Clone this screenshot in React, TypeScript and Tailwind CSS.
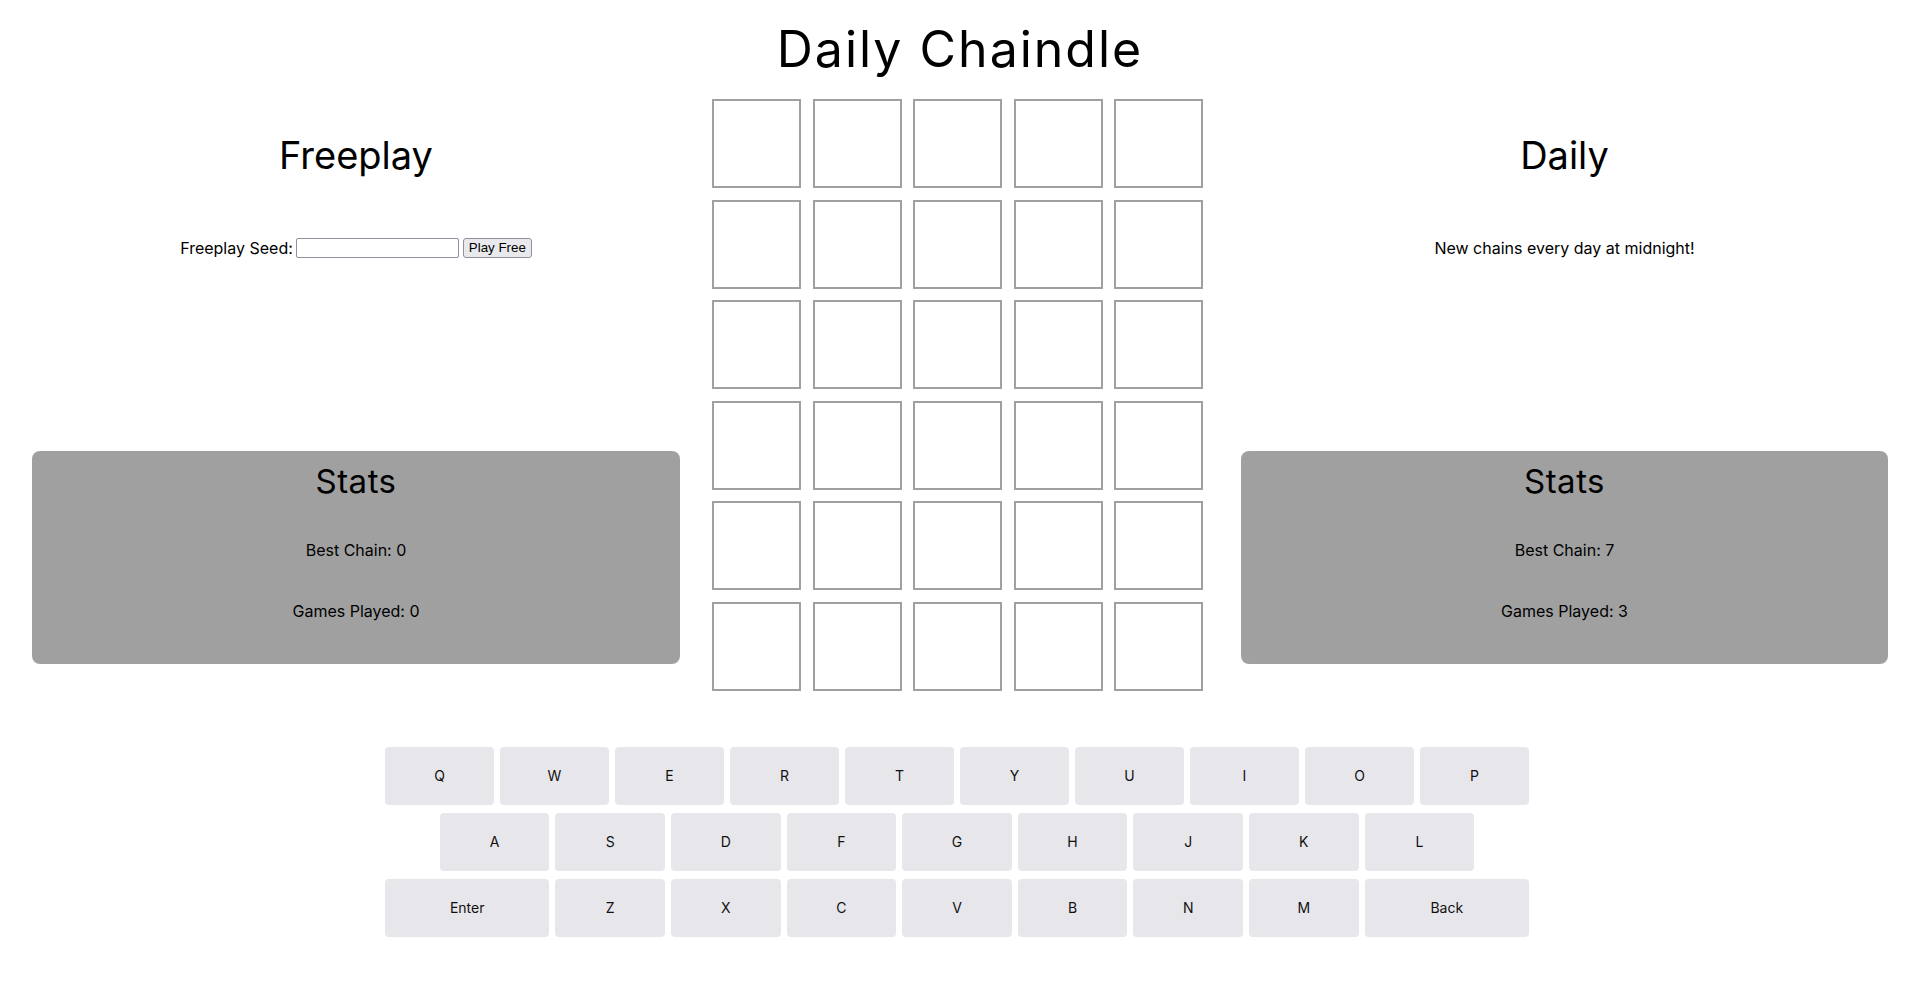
import React from "react";

const font = { fontFamily: "Inter, 'Noto Sans', sans-serif" };

function Tile() {
  return <div className="w-[89px] h-[89px] border-2 border-[#a0a0a0] bg-white" />;
}

function Key({ label, wide }: { label: string; wide?: boolean }) {
  return (
    <button
      className={`${wide ? "flex-[1.5]" : "flex-1"} mr-[6px] h-[58px] rounded-[4px] bg-[#e7e6eb] text-[14px] text-[#111] flex items-center justify-center`}
      style={font}
    >
      {label}
    </button>
  );
}

function Stats({ best, played }: { best: number; played: number }) {
  return (
    <div className="mt-[193px] h-[213px] rounded-[8px] bg-[#a0a0a0] pt-[10px] flex flex-col items-center text-black">
      <div className="text-[33px] leading-[40px] tracking-[0.5px]">Stats</div>
      <div className="mt-[37px] text-[16px] leading-[24px]">Best Chain: {best}</div>
      <div className="mt-[37px] text-[16px] leading-[24px]">Games Played: {played}</div>
    </div>
  );
}

export default function App() {
  const rows1 = ["Q", "W", "E", "R", "T", "Y", "U", "I", "O", "P"];
  const rows2 = ["A", "S", "D", "F", "G", "H", "J", "K", "L"];
  const rows3 = ["Z", "X", "C", "V", "B", "N", "M"];
  return (
    <div className="w-[1920px] h-[994px] bg-white text-black overflow-hidden" style={font}>
      <div className="pt-[19px] text-center text-[50px] leading-[60px] tracking-[2px]">Daily Chaindle</div>
      <div className="mt-[20px] flex">
        <div className="w-[712px] px-[32px]">
          <div className="mt-[32px] h-[48px] text-center text-[38px] leading-[48px]">Freeplay</div>
          <div className="mt-[59px] h-[20px] flex items-center justify-center text-[16px]">
            <span className="mr-[3px]">Freeplay Seed:</span>
            <input
              className="w-[163px] h-[20px] border border-[#8f8f9d] rounded-[2px] bg-white"
              type="text"
            />
            <button
              className="ml-[4px] h-[20px] px-[5px] border border-[#8f8f9d] rounded-[3px] bg-[#e9e9ed] text-[13.33px] leading-[18px]"
              style={{ fontFamily: "'Liberation Sans', Arial, sans-serif" }}
            >
              Play Free
            </button>
          </div>
          <Stats best={0} played={0} />
        </div>
        <div className="w-[497px]">
          <div className="grid grid-cols-[repeat(5,89px)] gap-x-[11.5px] gap-y-[11.5px]">
            {Array.from({ length: 30 }).map((_, i) => (
              <Tile key={i} />
            ))}
          </div>
        </div>
        <div className="flex-1 px-[32px]">
          <div className="mt-[32px] h-[48px] text-center text-[38px] leading-[48px]">Daily</div>
          <div className="mt-[59px] h-[20px] flex items-center justify-center text-[16px]">
            New chains every day at midnight!
          </div>
          <Stats best={7} played={3} />
        </div>
      </div>
      <div className="mt-[56px] w-[1150px] mx-auto flex flex-col gap-y-[8px]">
        <div className="flex">
          {rows1.map((k) => (
            <Key key={k} label={k} />
          ))}
        </div>
        <div className="flex">
          <div className="flex-[0.5]" />
          {rows2.map((k) => (
            <Key key={k} label={k} />
          ))}
          <div className="flex-[0.5]" />
        </div>
        <div className="flex">
          <Key label="Enter" wide />
          {rows3.map((k) => (
            <Key key={k} label={k} />
          ))}
          <Key label="Back" wide />
        </div>
      </div>
    </div>
  );
}
